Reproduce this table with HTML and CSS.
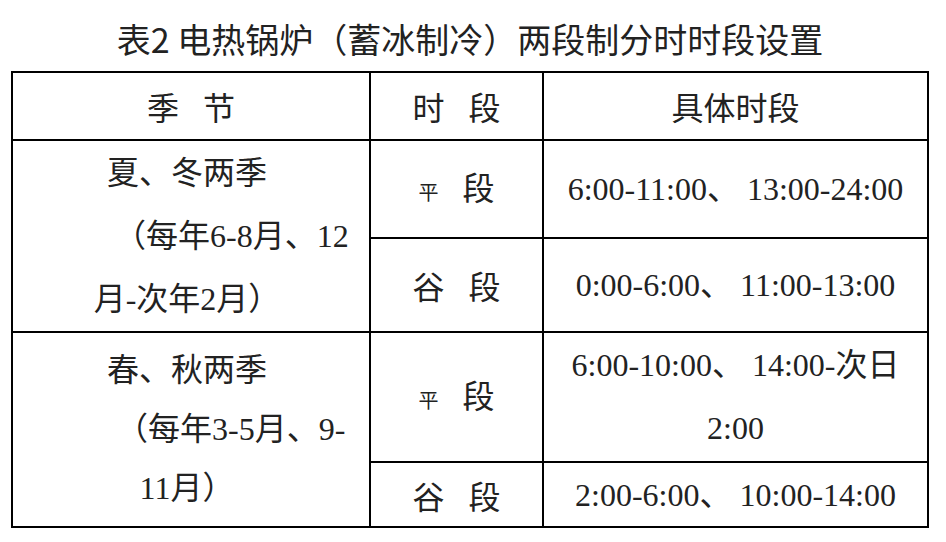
FILE: index.html
```html
<!DOCTYPE html>
<html lang="zh-CN">
<head>
<meta charset="utf-8">
<title>表2 电热锅炉（蓄冰制冷）两段制分时时段设置</title>
<link rel="stylesheet" href="styles.css">
</head>
<body>
<div class="page">
  <h1 class="title">表2 电热锅炉（蓄冰制冷）两段制分时时段设置</h1>
  <div class="table">
    <div class="cell head">季<span class="gap">节</span></div>
    <div class="cell head">时<span class="gap">段</span></div>
    <div class="cell head">具体时段</div>

    <div class="cell season season-a">
      <div class="ln">夏、冬两季</div>
      <div class="ln ln-a">（每年6-8月、12</div>
      <div class="ln">月-次年2月）</div>
    </div>
    <div class="cell period"><span class="small">平</span><span class="gap">段</span></div>
    <div class="cell time">6:00-11:00、 13:00-24:00</div>
    <div class="cell period">谷<span class="gap">段</span></div>
    <div class="cell time">0:00-6:00、 11:00-13:00</div>

    <div class="cell season season-b">
      <div class="ln">春、秋两季</div>
      <div class="ln ln-b">（每年3-5月、9-</div>
      <div class="ln">11月）</div>
    </div>
    <div class="cell period"><span class="small">平</span><span class="gap">段</span></div>
    <div class="cell time time-2">
      <div>6:00-10:00、 14:00-次日</div>
      <div>2:00</div>
    </div>
    <div class="cell period">谷<span class="gap">段</span></div>
    <div class="cell time">2:00-6:00、 10:00-14:00</div>
  </div>
</div>
</body>
</html>
```

FILE: styles.css
```css
html, body {
  margin: 0;
  padding: 0;
  background: #ffffff;
}

.page {
  width: 918px;
  padding: 22px 0 0 11px;
}

.title {
  margin: 0 0 15px;
  font-family: "Noto Sans CJK SC", "Noto Sans", sans-serif;
  font-size: 34px;
  line-height: 34px;
  font-weight: 400;
  color: #222222;
  text-align: center;
  white-space: nowrap;
}

.table {
  display: grid;
  grid-template-columns: 356px 171px 383px;
  grid-template-rows: 66px 96px 92px 128px 63px;
  gap: 2px;
  padding: 2px;
  background: #000000;
}

.cell {
  background: #ffffff;
  display: flex;
  flex-direction: column;
  align-items: center;
  justify-content: center;
  color: #222222;
  font-family: "Liberation Serif", "Noto Sans CJK SC", serif;
  font-size: 32px;
  line-height: 32px;
  white-space: nowrap;
}

.cell.period {
  flex-direction: row;
  align-items: baseline;
  align-content: center;
  font-family: "Noto Sans CJK SC", sans-serif;
  flex-wrap: wrap;
}

.head {
  flex-direction: row;
  font-family: "Noto Sans CJK SC", "Noto Sans", sans-serif;
  font-size: 32px;
}

.gap {
  margin-left: 24px;
}

.small {
  font-size: 20px;
}

.season {
  grid-row: span 2;
  align-items: stretch;
  padding-right: 8px;
  text-align: center;
}

.season-a .ln {
  line-height: 63px;
}

.season-b .ln {
  line-height: 59px;
}

.season .ln-a {
  text-align: left;
  padding-left: 101px;
}

.season .ln-b {
  text-align: left;
  padding-left: 103px;
}

.time-2 div {
  line-height: 63px;
}
```
